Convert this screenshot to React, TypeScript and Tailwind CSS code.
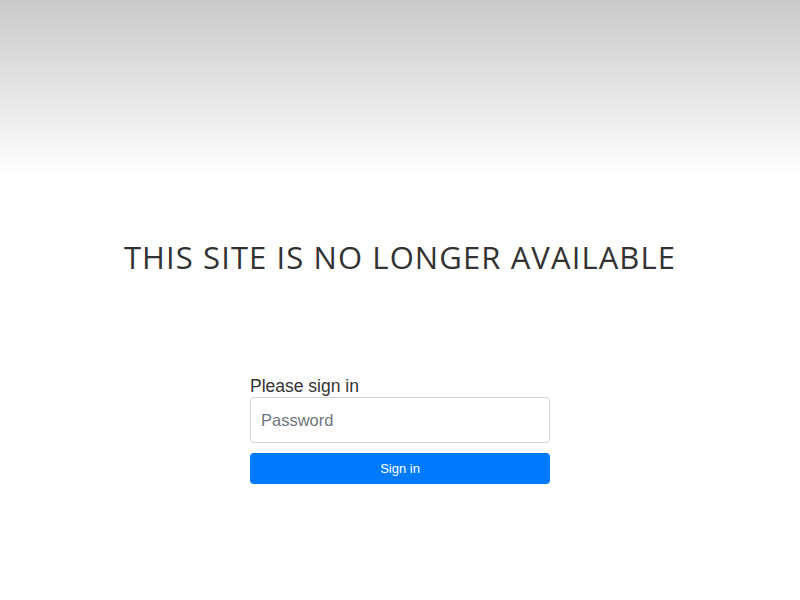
import React from "react";

export default function App() {
  return (
    <div className="w-[800px] h-[600px] bg-white relative overflow-hidden" style={{ fontFamily: '"Liberation Sans", Arial, sans-serif' }}>
      <div className="h-[176px] bg-gradient-to-b from-[#c9c9c9] to-white" />
      <div className="flex justify-center">
        <h1 className="mt-[61px] text-[31px] leading-[40px] text-[#333333] font-normal tracking-[1.1px] whitespace-nowrap" style={{ fontFamily: '"Open Sans", sans-serif' }}>
          THIS SITE IS NO LONGER AVAILABLE
        </h1>
      </div>
      <div className="flex justify-center mt-[98px]">
        <form className="w-[300px] flex flex-col" onSubmit={(e) => e.preventDefault()}>
          <label className="pt-px text-[17.5px] leading-[21px] text-[#333]">Please sign in</label>
          <input
            type="password"
            placeholder="Password"
            className="h-[46px] w-full border border-[#ced4da] rounded-[4px] px-[10px] text-[16.5px] placeholder:text-[#6c757d] outline-none"
          />
          <button className="mt-[10px] h-[31px] w-full bg-[#007bff] text-white text-[13px] rounded-[4px]">Sign in</button>
        </form>
      </div>
    </div>
  );
}
